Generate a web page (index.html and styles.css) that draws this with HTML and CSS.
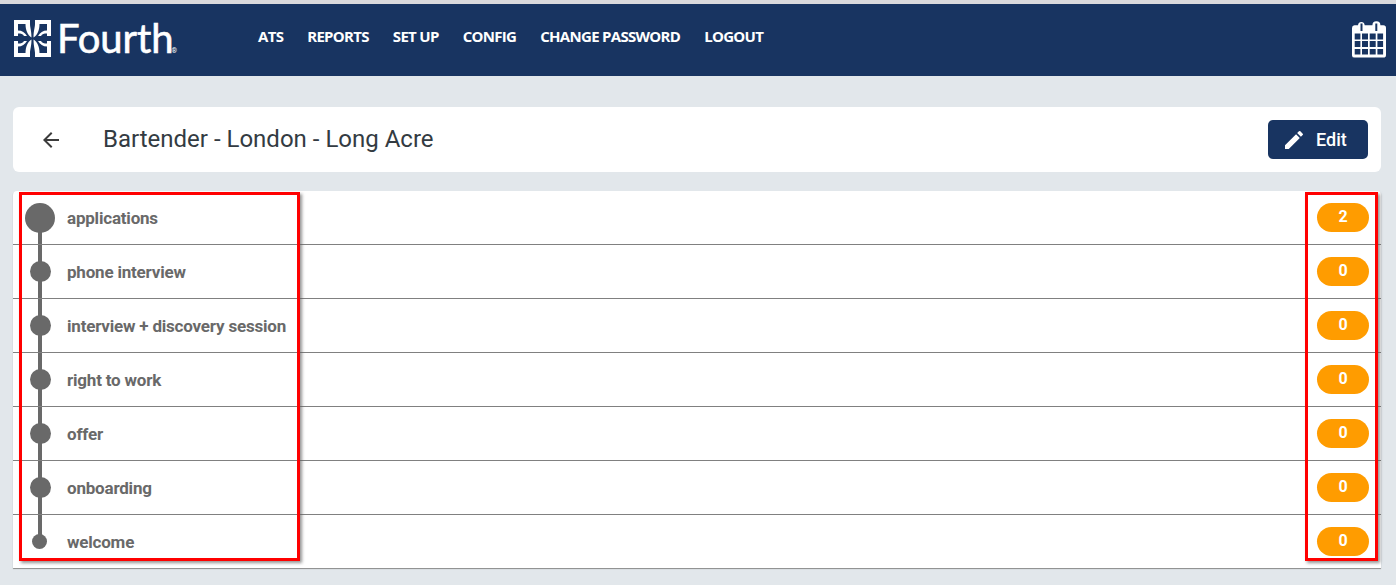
FILE: index.html
```html
<!DOCTYPE html>
<html lang="en">
<head>
<meta charset="utf-8">
<title>Bartender - London - Long Acre</title>
<link rel="stylesheet" href="styles.css">
</head>
<body>
<header class="topbar">
  <div class="brand">
    <svg class="brand-mark" viewBox="0 0 37 37" width="37" height="37" aria-hidden="true">
      <defs>
        <g id="petal" fill="#fff">
          <path d="M0 0H16V4H4V16H0z"/>
          <path d="M11.500 4C11.500 10 13.500 15 17.500 17.500C17.500 11 16 7 16 4z"/>
          <path d="M4 10.500C8 10.500 11 12.500 13 16H10C9 14 7 13.500 4 13.500z"/>
        </g>
      </defs>
      <use href="#petal"/>
      <use href="#petal" transform="matrix(-1 0 0 1 37 0)"/>
      <use href="#petal" transform="matrix(1 0 0 -1 0 37)"/>
      <use href="#petal" transform="matrix(-1 0 0 -1 37 37)"/>
    </svg>
    <span class="brand-name">Fourth</span><span class="brand-reg">®</span>
  </div>
  <nav class="menu">
    <a>ATS</a>
    <a>REPORTS</a>
    <a>SET UP</a>
    <a>CONFIG</a>
    <a>CHANGE PASSWORD</a>
    <a>LOGOUT</a>
  </nav>
  <svg class="calendar" viewBox="0 0 34 37" width="34" height="37" aria-hidden="true">
    <path fill="#fff" fill-rule="evenodd" d="M2.500 4.300H6a3.400 4 0 0 1 6.700 0h7.700a4 4 0 0 1 8 0h3a2.600 2.600 0 0 1 2.600 2.600V34a2.600 2.600 0 0 1-2.600 2.600H2.500A2.500 2.500 0 0 1 0 34V6.900a2.600 2.600 0 0 1 2.500-2.600z
    M8.500 2.600V10h2V2.600zM23.300 2.600V10h2V2.600z
    M2.700 12.600v6h5.700v-6zM10 12.600v6h6v-6zM17.700 12.600v6h6v-6zM25.400 12.600v6h5.700v-6z
    M2.700 20v6h5.700v-6zM10 20v6h6v-6zM17.700 20v6h6v-6zM25.400 20v6h5.700v-6z
    M2.700 28v5.600h5.700V28zM10 28v5.600h6V28zM17.700 28v5.600h6V28zM25.400 28v5.600h5.700V28z"/>
  </svg>
</header>

<main class="content">
  <section class="title-card">
    <svg class="back" viewBox="0 0 24 24" width="24" height="24" aria-hidden="true">
      <path fill="#3c3c3c" d="M20 11H7.830l5.590-5.590L12 4l-8 8 8 8 1.410-1.410L7.830 13H20z"/>
    </svg>
    <h1 class="title">Bartender - London - Long Acre</h1>
    <button class="edit">
      <svg viewBox="0 0 24 24" width="24" height="24" aria-hidden="true">
        <path fill="#fff" d="M3 17.250V21h3.750L17.810 9.940l-3.750-3.750L3 17.250zM20.710 7.040a1 1 0 0 0 0-1.410l-2.340-2.340a1 1 0 0 0-1.410 0l-1.830 1.830 3.750 3.750 1.830-1.830z"/>
      </svg>
      <span>Edit</span>
    </button>
  </section>

  <section class="stages">
    <div class="rail"></div>
    <div class="stage first"><span class="dot big"></span><span class="name">applications</span><span class="count">2</span></div>
    <div class="stage"><span class="dot"></span><span class="name">phone interview</span><span class="count">0</span></div>
    <div class="stage"><span class="dot"></span><span class="name">interview + discovery session</span><span class="count">0</span></div>
    <div class="stage"><span class="dot"></span><span class="name">right to work</span><span class="count">0</span></div>
    <div class="stage"><span class="dot"></span><span class="name">offer</span><span class="count">0</span></div>
    <div class="stage"><span class="dot"></span><span class="name">onboarding</span><span class="count">0</span></div>
    <div class="stage last"><span class="dot small"></span><span class="name">welcome</span><span class="count">0</span></div>
    <div class="mark mark-left"></div>
    <div class="mark mark-right"></div>
  </section>
</main>
</body>
</html>
```

FILE: styles.css
```css
* { box-sizing: border-box; }

html, body {
  margin: 0;
  height: 585px;
  overflow: hidden;
}

body {
  background: #e2e7eb;
  font-family: Roboto, "Liberation Sans", sans-serif;
  border-top: 4px solid #d9d9dc;
}

.topbar {
  display: flex;
  align-items: center;
  height: 72px;
  padding: 0 10px 0 14px;
  background: #183461;
  color: #fff;
}

.brand {
  display: flex;
  align-items: flex-start;
  width: 244px;
  height: 40px;
}

.brand-mark {
  flex: none;
}

.brand-name {
  margin-left: 6px;
  margin-top: -2px;
  font-family: Lato, "Open Sans", sans-serif;
  font-size: 40px;
  line-height: 40px;
  letter-spacing: -0.1px;
  -webkit-text-stroke: 0.6px #fff;
}

.brand-reg {
  margin-top: 26px;
  margin-left: -2px;
  font-size: 7px;
  line-height: 10px;
}

.menu {
  display: flex;
  gap: 24px;
  flex: 1;
  margin-top: -8px;
}

.menu a {
  font-family: "Open Sans", "Liberation Sans", sans-serif;
  font-size: 15px;
  font-weight: 700;
  letter-spacing: -0.7px;
  color: #fff;
}

.calendar {
  flex: none;
  margin-top: -2px;
}

.content {
  padding: 31px 15px 0 13px;
}

.title-card {
  display: flex;
  align-items: center;
  height: 65px;
  padding: 0 13px 0 27px;
  background: #fff;
  border-radius: 6px;
}

.back {
  flex: none;
  margin-left: -1px;
  margin-right: 1px;
}

.title {
  flex: 1;
  margin: -2px 0 0 39px;
  font-size: 24px;
  font-weight: 400;
  color: #333b42;
}

.edit {
  display: flex;
  align-items: center;
  gap: 10px;
  width: 100px;
  height: 39px;
  padding: 0 0 0 14px;
  border: 0;
  border-radius: 5px;
  background: #183461;
  color: #fff;
  font-family: inherit;
  font-size: 18px;
  font-weight: 500;
}

.stages {
  position: relative;
  margin-top: 19px;
  background: #fff;
  border-radius: 4px 4px 0 0;
  box-shadow: 0 1px 1px #8a8a8a;
}

.rail {
  position: absolute;
  left: 25px;
  top: 26px;
  width: 4px;
  height: 326px;
  background: #696969;
}

.stage {
  position: relative;
  display: flex;
  align-items: center;
  height: 54px;
  padding: 0 12px 0 14px;
  border-bottom: 1px solid #808080;
}

.first {
  height: 54px;
}

.last {
  height: 53px;
  border-bottom: 0;
}

.dot {
  flex: none;
  width: 21px;
  height: 21px;
  margin: 0 4px 0 3px;
  border-radius: 50%;
  background: #696969;
}

.dot.big {
  width: 30px;
  height: 30px;
  margin: 0 0 0 -2px;
}

.dot.small {
  width: 15px;
  height: 15px;
  margin: 0 8px 0 5px;
}

.name {
  flex: 1;
  margin-left: 12px;
  font-size: 17px;
  font-weight: 700;
  letter-spacing: -0.2px;
  color: #696969;
}

.count {
  flex: none;
  width: 52px;
  height: 29px;
  border-radius: 15px;
  background: #ff9c00;
  color: #fff;
  font-size: 16px;
  font-weight: 700;
  line-height: 27px;
  text-align: center;
}

.mark {
  position: absolute;
  top: 1px;
  height: 369px;
  border: 3px solid #f00;
  box-shadow: 2px 2px 3px rgba(90, 90, 90, 0.65);
  pointer-events: none;
}

.mark-left {
  left: 6px;
  width: 281px;
}

.mark-right {
  left: 1292px;
  width: 73px;
}
```
